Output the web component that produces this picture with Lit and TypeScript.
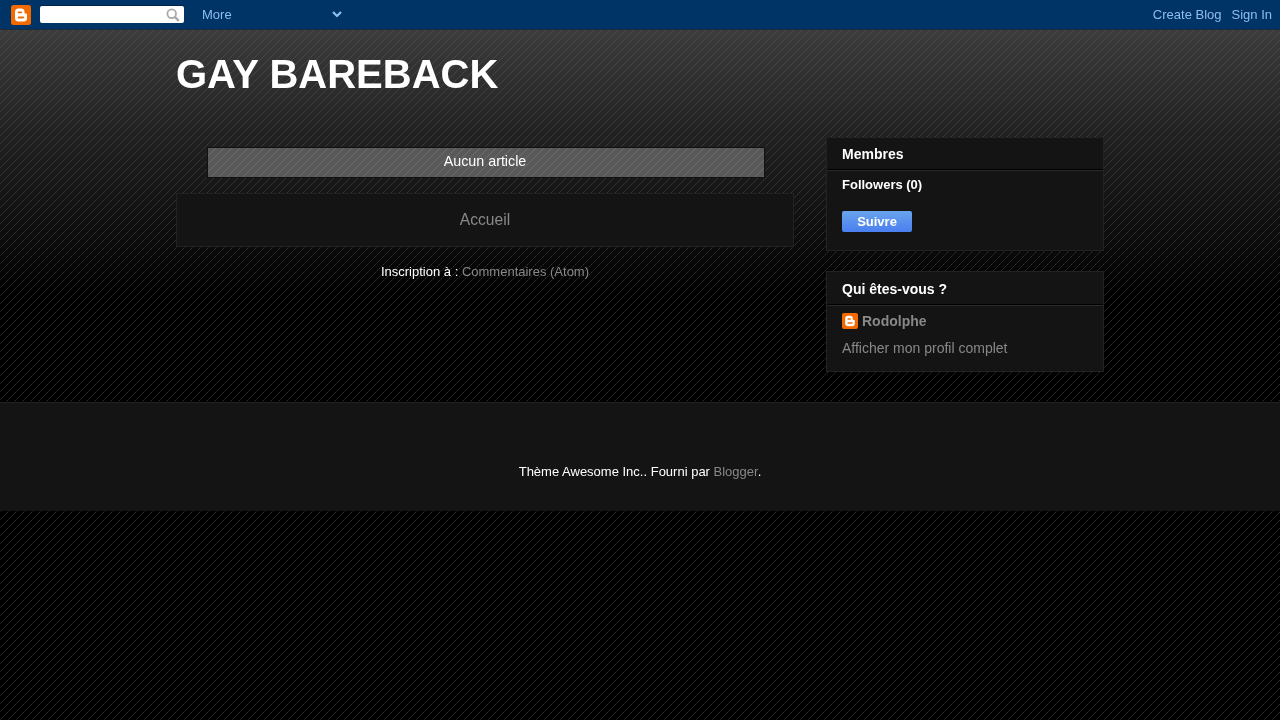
import { LitElement, html, css, svg, unsafeCSS } from 'lit'
import { customElement } from 'lit/decorators.js'

// 8px diagonal tile of the page texture: grey dots on a diagonal over a dark dither
const tile = (dot: string, alpha: number): string => {
  let cells = ''
  for (let y = 0; y < 8; y++) {
    for (let x = 0; x < 8; x++) {
      if ((x + y) % 8 === 7) {
        cells += `<rect x='${x}' y='${y}' width='1' height='1' fill='${dot}' fill-opacity='${x % 2 === 1 ? alpha : alpha * 0.4}'/>`
      } else if ((x + y) % 2 === 1) {
        cells += `<rect x='${x}' y='${y}' width='1' height='1' fill='black' fill-opacity='0.1'/>`
      }
    }
  }
  return `url("data:image/svg+xml,<svg xmlns='http://www.w3.org/2000/svg' width='8' height='8' shape-rendering='crispEdges'>${cells}</svg>")`
}

const bloggerPath = svg`<path fill="#fff" fill-rule="evenodd" d="M7.2 3.500h3.100c1.900 0 3.200 1.300 3.200 3v1.200c0 .6.400.9 1 .9h.6c.5 0 .9.4.9.9v3.900c0 1.600-1.400 3.100-3.200 3.100H7.200C5.400 16.500 4 15.100 4 13.400V6.600C4 4.900 5.400 3.500 7.200 3.500zM7.600 6.500c-.5 0-.9.4-.9.9s.4.9.9.9h2.700c.5 0 .9-.4.9-.9s-.4-.9-.9-.9zM7.600 11.600c-.5 0-.9.4-.9.9s.4.9.9.9h4.800c.5 0 .9-.4.9-.9s-.4-.9-.9-.9z"/>`

function bloggerIcon (size: number) {
  return html`<svg width=${size} height=${size} viewBox="0 0 20 20">
    <rect width="20" height="20" rx="2.500" fill="#f46a00"/>
    ${bloggerPath}
  </svg>`
}

@customElement('app-root')
export class AppRoot extends LitElement {
  static styles = css`
    :host {
      display: block;
      min-height: 720px;
      background-color: #000;
      background-image:
        ${unsafeCSS(tile('%23555', 0.55))},
        linear-gradient(#3f3f3f 30px, #242424 130px, #000 300px);
      font-family: "Liberation Sans", Arial, sans-serif;
      font-size: 13px;
      color: #fff;
    }

    a {
      color: #888;
      text-decoration: none;
    }

    .navbar, .content, footer {
      will-change: transform;
    }

    .navbar {
      height: 29px;
      display: flex;
      align-items: center;
      background: #003366;
      border-bottom: 1px solid #1c2a3a;
    }

    .nav-logo {
      display: flex;
      margin-left: 11px;
    }

    .search {
      width: 144px;
      height: 17px;
      margin-left: 9px;
      box-sizing: border-box;
      background: #fff;
      border-radius: 2px;
      box-shadow: 0 -1px 0 #00214a;
      display: flex;
      align-items: center;
      justify-content: flex-end;
      padding-right: 4px;
    }

    .more {
      width: 130px;
      margin-left: 18px;
      color: #8fbdf0;
    }

    .chevron {
      display: flex;
    }

    .nav-links {
      margin-left: auto;
      margin-right: 8px;
      display: flex;
      gap: 10px;
    }

    .nav-links a {
      color: #8fbdf0;
    }

    .content {
      width: 928px;
      margin: 0 auto;
      height: 372px;
      display: flex;
      flex-direction: column;
    }

    h1 {
      margin: 0;
      height: 107px;
      padding-top: 21px;
      box-sizing: border-box;
      font-size: 40px;
      line-height: 46px;
      font-weight: bold;
    }

    .columns {
      display: flex;
      justify-content: space-between;
    }

    .main {
      width: 618px;
      padding-top: 10px;
      text-align: center;
    }

    .date {
      width: 558px;
      height: 31px;
      margin-left: 31px;
      padding-right: 2px;
      box-sizing: border-box;
      background-color: #5e5e5e;
      background-image: ${unsafeCSS(tile('%23888', 0.3))};
      border: 1px solid #111;
      font-size: 14.3px;
      line-height: 26px;
    }

    .pager {
      height: 54px;
      margin-top: 15px;
      box-sizing: border-box;
      background: #141414;
      border: 1px solid #222;
      font-size: 15.6px;
      line-height: 52px;
      color: #888;
    }

    .feed {
      margin-top: 16px;
      line-height: 17px;
    }

    .sidebar {
      width: 278px;
      display: flex;
      flex-direction: column;
      gap: 20px;
    }

    .widget {
      box-sizing: border-box;
      background: #141414;
      border: 1px solid #222;
    }

    h2 {
      margin: 0;
      height: 33px;
      padding-left: 15px;
      box-sizing: border-box;
      border-bottom: 1px solid #2a2a2a;
      box-shadow: inset 0 -1px 0 #000;
      font-size: 14px;
      line-height: 33px;
    }

    .profile-widget h2 {
      height: 34px;
      line-height: 35px;
    }

    .followers {
      height: 79px;
      padding: 6px 15px 0;
      box-sizing: border-box;
    }

    .followers b {
      display: block;
      line-height: 15px;
    }

    .follow-btn {
      display: block;
      width: 70px;
      height: 21px;
      margin-top: 19px;
      box-sizing: border-box;
      border-radius: 2px;
      background: linear-gradient(#6aa3ec, #4a7ff0);
      color: #fff;
      text-align: center;
      font-weight: bold;
      line-height: 21px;
    }

    .profile {
      height: 65px;
      padding: 7px 15px 0;
      box-sizing: border-box;
      font-size: 14px;
    }

    .profile-name {
      display: flex;
      align-items: center;
      gap: 4px;
      height: 16px;
      font-weight: bold;
    }

    .profile-name svg {
      display: block;
    }

    .profile-link {
      display: block;
      margin-top: 11px;
      line-height: 16px;
    }

    footer {
      height: 109px;
      box-sizing: border-box;
      background: #141414;
      border-top: 1px solid #222;
      padding-top: 61px;
      text-align: center;
      line-height: 15px;
    }
  `

  render () {
    return html`
      <div class="navbar">
        <a class="nav-logo">${bloggerIcon(20)}</a>
        <div class="search">
          <svg width="14" height="14" viewBox="0 0 14 14" fill="none" stroke="#aaa">
            <circle cx="5.700" cy="5.700" r="4.300" stroke-width="1.800"/>
            <path d="M8.800 8.800l4 4" stroke-width="2.400"/>
          </svg>
        </div>
        <span class="more">More</span>
        <span class="chevron">
          <svg width="10" height="7" viewBox="0 0 10 7" fill="none" stroke="#8fbdf0" stroke-width="2.200">
            <path d="M1 1l4 4 4-4"/>
          </svg>
        </span>
        <div class="nav-links"><a>Create Blog</a><a>Sign In</a></div>
      </div>
      <div class="content">
        <h1>GAY BAREBACK</h1>
        <div class="columns">
          <div class="main">
            <div class="date">Aucun article</div>
            <div class="pager"><a>Accueil</a></div>
            <div class="feed">Inscription à : <a>Commentaires (Atom)</a></div>
          </div>
          <div class="sidebar">
            <section class="widget">
              <h2>Membres</h2>
              <div class="followers">
                <b>Followers (0)</b>
                <a class="follow-btn">Suivre</a>
              </div>
            </section>
            <section class="widget profile-widget">
              <h2>Qui êtes-vous ?</h2>
              <div class="profile">
                <a class="profile-name">${bloggerIcon(16)}<span>Rodolphe</span></a>
                <a class="profile-link">Afficher mon profil complet</a>
              </div>
            </section>
          </div>
        </div>
      </div>
      <footer>Thème Awesome Inc.. Fourni par <a>Blogger</a>.</footer>
    `
  }
}
